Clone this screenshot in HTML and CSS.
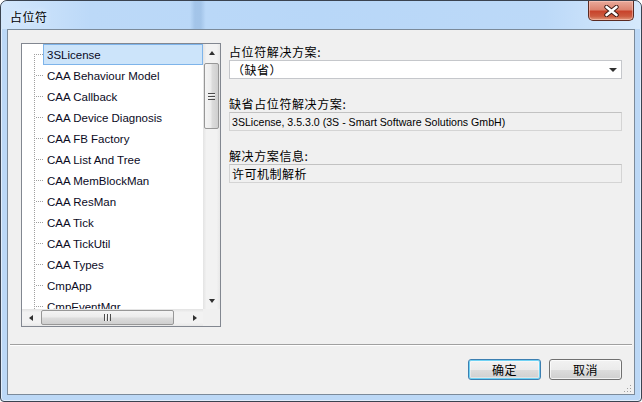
FILE: index.html
```html
<!DOCTYPE html>
<html lang="zh-CN">
<head>
    <meta charset="UTF-8">
    <title>占位符</title>
    <link rel="stylesheet" href="styles.css">
</head>
<body>
    <div class="window">
        <div class="titlebar">
            <span class="title">占位符</span>
            <button class="close-btn" type="button">
                <svg width="15" height="12" viewBox="0 0 15 12">
                    <path d="M2.5 2 L12.5 10 M12.5 2 L2.5 10" stroke="#3b1a14" stroke-width="4.4" stroke-linecap="round"/>
                    <path d="M2.5 2 L12.5 10 M12.5 2 L2.5 10" stroke="#ffffff" stroke-width="2.6" stroke-linecap="round"/>
                </svg>
            </button>
        </div>

        <div class="client">
            <div class="main">
                <!-- library tree -->
                <div class="tree">
                    <div class="tree-rows">
                        <div class="tree-line"></div>
                        <div class="tree-row selected"><span>3SLicense</span></div>
                        <div class="tree-row"><span>CAA Behaviour Model</span></div>
                        <div class="tree-row"><span>CAA Callback</span></div>
                        <div class="tree-row"><span>CAA Device Diagnosis</span></div>
                        <div class="tree-row"><span>CAA FB Factory</span></div>
                        <div class="tree-row"><span>CAA List And Tree</span></div>
                        <div class="tree-row"><span>CAA MemBlockMan</span></div>
                        <div class="tree-row"><span>CAA ResMan</span></div>
                        <div class="tree-row"><span>CAA Tick</span></div>
                        <div class="tree-row"><span>CAA TickUtil</span></div>
                        <div class="tree-row"><span>CAA Types</span></div>
                        <div class="tree-row"><span>CmpApp</span></div>
                        <div class="tree-row"><span>CmpEventMgr</span></div>
                    </div>
                    <div class="vscroll">
                        <div class="sb-arrow"><i class="tri up"></i></div>
                        <div class="sb-track">
                            <div class="vthumb"><i class="grip-v"></i></div>
                        </div>
                        <div class="sb-arrow"><i class="tri down"></i></div>
                    </div>
                    <div class="hscroll">
                        <div class="sb-arrow"><i class="tri left"></i></div>
                        <div class="sb-track">
                            <div class="hthumb"><i class="grip-h"></i></div>
                        </div>
                        <div class="sb-arrow"><i class="tri right"></i></div>
                    </div>
                    <div class="sb-corner"></div>
                </div>

                <!-- details -->
                <div class="panel">
                    <div class="label">占位符解决方案:</div>
                    <div class="combo">
                        <span>（缺省）</span>
                        <i class="tri down"></i>
                    </div>

                    <div class="label second">缺省占位符解决方案:</div>
                    <div class="readonly latin">3SLicense, 3.5.3.0 (3S - Smart Software Solutions GmbH)</div>

                    <div class="label third">解决方案信息:</div>
                    <div class="readonly">许可机制解析</div>
                </div>
            </div>

            <div class="separator"></div>

            <div class="buttons">
                <button class="btn default" type="button">确定</button>
                <button class="btn" type="button">取消</button>
            </div>

            <svg class="size-grip" width="9" height="9" viewBox="0 0 9 9">
                <rect x="7" y="1" width="1" height="1" fill="#a0a0a0"/>
                <rect x="4" y="4" width="1" height="1" fill="#a0a0a0"/>
                <rect x="7" y="4" width="1" height="1" fill="#a0a0a0"/>
                <rect x="1" y="7" width="1" height="1" fill="#a0a0a0"/>
                <rect x="4" y="7" width="1" height="1" fill="#a0a0a0"/>
                <rect x="7" y="7" width="1" height="1" fill="#a0a0a0"/>
            </svg>
        </div>
    </div>
</body>
</html>
```

FILE: styles.css
```css
body {
    margin: 0;
    font-family: "Noto Sans CJK SC", sans-serif;
    font-size: 12px;
}

.window {
    width: 642px;
    height: 402px;
    box-sizing: border-box;
    border: 1px solid #3a4350;
    border-radius: 7px 7px 4px 4px;
    background: #bcd8f6;
    box-shadow: inset 0 0 0 1px rgba(255, 255, 255, 0.55);
    display: flex;
    flex-direction: column;
    padding: 0 6px 6px;
    position: relative;
    overflow: hidden;
}

.titlebar {
    height: 28px;
    margin: 0 -6px;
    padding: 0 7px 0 9px;
    display: flex;
    justify-content: space-between;
    align-items: flex-start;
    border-radius: 6px 6px 0 0;
    background:
        linear-gradient(to right,
            rgba(255, 255, 255, 0) 0%,
            rgba(255, 255, 255, 0) 29.5%,
            rgba(120, 160, 205, 0.35) 30.3%,
            rgba(120, 160, 205, 0.35) 31.2%,
            rgba(255, 255, 255, 0) 32%),
        linear-gradient(to right, #d3e7fc 0%, #bcd9f8 14%, #b8d7f8 50%, #bcd9f8 85%, #d6e9fc 100%);
}

.title {
    line-height: 28px;
    margin-top: 2px;
    letter-spacing: 0.5px;
    color: #000;
    text-shadow: 0 0 6px rgba(255, 255, 255, 0.9);
}

.close-btn {
    width: 46px;
    height: 20px;
    margin-top: 0;
    padding: 0;
    border: 1px solid #5a2a22;
    border-top: none;
    border-radius: 0 0 5px 5px;
    background: linear-gradient(to bottom, #e9aa9b 0%, #dc8470 45%, #c8442c 55%, #cc5a3f 80%, #e1987b 100%);
    box-shadow: inset 0 0 0 1px rgba(255, 210, 200, 0.5);
    display: flex;
    align-items: center;
    justify-content: center;
}

.client {
    flex: 1;
    border: 1px solid #7b8a9a;
    background: #f0f0f0;
    display: flex;
    flex-direction: column;
    position: relative;
}

.main {
    display: flex;
    gap: 8px;
    padding: 13px 12px 0 13px;
}

/* tree view */

.tree {
    width: 200px;
    height: 284px;
    box-sizing: border-box;
    border: 1px solid #828790;
    background: #fff;
    display: grid;
    grid-template-columns: 1fr 17px;
    grid-template-rows: 1fr 17px;
}

.tree-rows {
    position: relative;
    overflow: hidden;
    font-family: "Liberation Sans", Arial, sans-serif;
    font-size: 11.5px;
    color: #0a0a1e;
}

.tree-line {
    position: absolute;
    left: 12px;
    top: 10px;
    bottom: 0;
    width: 1px;
    background: repeating-linear-gradient(to bottom, #a0a0a0 0 1px, transparent 1px 2px);
}

.tree-row {
    height: 21px;
    display: flex;
    align-items: stretch;
    position: relative;
}

.tree-row::before {
    content: "";
    position: absolute;
    left: 13px;
    top: 10px;
    width: 8px;
    height: 1px;
    background: repeating-linear-gradient(to right, transparent 0 1px, #a0a0a0 1px 2px);
}

.tree-row span {
    flex: 1;
    margin-left: 21px;
    padding-left: 3px;
    border: 1px solid transparent;
    display: flex;
    align-items: center;
    white-space: nowrap;
}

.tree-row.selected span {
    background: #cce4fa;
    border-color: #7eb4ea;
}

/* scrollbars */

.vscroll,
.hscroll {
    display: flex;
    background: linear-gradient(to right, #e3e3e3, #f2f2f2 20%, #f2f2f2 80%, #e8e8e8);
}

.vscroll {
    flex-direction: column;
}

.hscroll {
    background: linear-gradient(to bottom, #e3e3e3, #f2f2f2 20%, #f2f2f2 80%, #e8e8e8);
}

.sb-arrow {
    width: 17px;
    height: 17px;
    flex: none;
    display: flex;
    align-items: center;
    justify-content: center;
}

.sb-track {
    flex: 1;
    display: flex;
}

.vscroll .sb-track {
    flex-direction: column;
}

.vthumb {
    margin: 2px 1px 0;
    height: 66px;
    box-sizing: border-box;
    border: 1px solid #979797;
    border-radius: 2px;
    background: linear-gradient(to right, #f4f4f4, #ececec 45%, #dcdcdc 55%, #cfcfcf);
    display: flex;
    align-items: center;
    justify-content: center;
}

.hthumb {
    margin: 1px 0 1px 2px;
    width: 133px;
    box-sizing: border-box;
    border: 1px solid #979797;
    border-radius: 2px;
    background: linear-gradient(to bottom, #f4f4f4, #ececec 45%, #dcdcdc 55%, #cfcfcf);
    display: flex;
    align-items: center;
    justify-content: center;
}

.grip-v {
    width: 7px;
    height: 7px;
    background: repeating-linear-gradient(to bottom, #4c4c4c 0 1px, #f4f4f4 1px 2px, transparent 2px 3px);
}

.grip-h {
    width: 7px;
    height: 7px;
    background: repeating-linear-gradient(to right, #4c4c4c 0 1px, #f4f4f4 1px 2px, transparent 2px 3px);
}

.sb-corner {
    background: #f0f0f0;
}

.tri {
    width: 0;
    height: 0;
    display: block;
}

.tri.up {
    border-left: 3.5px solid transparent;
    border-right: 3.5px solid transparent;
    border-bottom: 4px solid #303030;
}

.tri.down {
    border-left: 3.5px solid transparent;
    border-right: 3.5px solid transparent;
    border-top: 4px solid #303030;
}

.tri.left {
    border-top: 3.5px solid transparent;
    border-bottom: 3.5px solid transparent;
    border-right: 4px solid #303030;
}

.tri.right {
    border-top: 3.5px solid transparent;
    border-bottom: 3.5px solid transparent;
    border-left: 4px solid #303030;
}

/* right panel */

.panel {
    flex: 1;
    display: flex;
    flex-direction: column;
}

.label {
    height: 17px;
    line-height: 17px;
    letter-spacing: 0.6px;
    color: #000;
}

.label.second {
    margin-top: 16px;
}

.label.third {
    margin-top: 16px;
}

.combo {
    height: 19px;
    box-sizing: border-box;
    border: 1px solid #c5c7cb;
    background: #fff;
    display: flex;
    align-items: center;
    justify-content: space-between;
    padding: 0 4px 0 2px;
    letter-spacing: 0.5px;
}

.combo .tri.down {
    border-left-width: 4px;
    border-right-width: 4px;
}

.readonly {
    height: 19px;
    box-sizing: border-box;
    border: 1px solid #d4d4d4;
    border-top-color: #c2c2c2;
    background: #f0f0f0;
    display: flex;
    align-items: center;
    padding-left: 2px;
    white-space: nowrap;
    overflow: hidden;
    letter-spacing: 0.5px;
}

.readonly.latin {
    font-family: "Liberation Sans", Arial, sans-serif;
    font-size: 10.6px;
    letter-spacing: 0;
}

.separator {
    margin: 17px 2px 0;
    border-top: 1px solid #a0a0a0;
    border-bottom: 1px solid #ffffff;
}

.buttons {
    display: flex;
    justify-content: flex-end;
    gap: 8px;
    margin-top: 13px;
    padding-right: 12px;
}

.btn {
    width: 73px;
    height: 21px;
    padding: 0;
    border: 1px solid #707070;
    border-radius: 3px;
    background: linear-gradient(to bottom, #f2f2f2 0%, #ebebeb 50%, #dddddd 51%, #cfcfcf 100%);
    box-shadow: inset 0 0 0 1px rgba(255, 255, 255, 0.7);
    font-family: "Noto Sans CJK SC", sans-serif;
    font-size: 12px;
    letter-spacing: 0.5px;
    color: #000;
}

.btn.default {
    border-color: #3c7fb1;
    box-shadow: inset 0 0 0 1px #6fd2f4, inset 0 0 0 2px rgba(255, 255, 255, 0.4);
}

.size-grip {
    position: absolute;
    right: 2px;
    bottom: 1px;
}
```
